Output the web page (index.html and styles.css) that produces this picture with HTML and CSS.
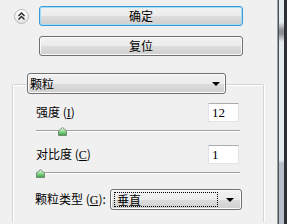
FILE: index.html
```html
<!DOCTYPE html>
<html>
<head>
<meta charset="utf-8">
<link rel="stylesheet" href="styles.css">
</head>
<body>
<div class="app">
  <div class="main">
    <div class="top-row">
      <div class="collapse">
        <svg width="15" height="15" viewBox="0 0 15 15">
          <polyline points="4.5,7 7.5,4 10.5,7" fill="none" stroke="#222" stroke-width="1.3"/>
          <polyline points="4.5,10.5 7.5,7.5 10.5,10.5" fill="none" stroke="#222" stroke-width="1.3"/>
        </svg>
      </div>
      <div class="btn btn-focus">确定</div>
    </div>
    <div class="btn-row"><div class="btn">复位</div></div>
    <div class="group">
      <div class="combo combo-head"><span class="combo-text">颗粒</span><span class="arrow"></span></div>
      <div class="field"><span class="label">强度 (<u>I</u>)</span><span class="num">12</span></div>
      <div class="slider"><span class="track"></span><span class="thumb" style="left:22px"><svg width="9" height="9" viewBox="0 0 9 9"><defs><linearGradient id="g1" x1="0" y1="0" x2="0" y2="1"><stop offset="0" stop-color="#f4fbf4"/><stop offset="0.5" stop-color="#8fd98f"/><stop offset="1" stop-color="#2f9e3a"/></linearGradient></defs><polygon points="4.5,0.5 8.5,4 8.5,8.5 0.5,8.5 0.5,4" fill="url(#g1)" stroke="#7a8a7a" stroke-width="1"/></svg></span></div>
      <div class="field field2"><span class="label">对比度 (<u>C</u>)</span><span class="num">1</span></div>
      <div class="slider"><span class="track"></span><span class="thumb" style="left:0px"><svg width="9" height="9" viewBox="0 0 9 9"><defs><linearGradient id="g2" x1="0" y1="0" x2="0" y2="1"><stop offset="0" stop-color="#f4fbf4"/><stop offset="0.5" stop-color="#8fd98f"/><stop offset="1" stop-color="#2f9e3a"/></linearGradient></defs><polygon points="4.5,0.5 8.5,4 8.5,8.5 0.5,8.5 0.5,4" fill="url(#g2)" stroke="#7a8a7a" stroke-width="1"/></svg></span></div>
      <div class="type-row">
        <span class="label">颗粒类型 (<u>G</u>):</span>
        <div class="combo combo-type"><span class="focus-rect">垂直</span><span class="arrow"></span></div>
      </div>
    </div>
  </div>
  <div class="edge">
    <div class="edge-a"></div>
    <div class="edge-b"></div>
    <div class="edge-c"></div>
    <div class="edge-d"></div>
  </div>
</div>
</body>
</html>
```

FILE: styles.css
```css
* { box-sizing: border-box; }
html, body { margin: 0; padding: 0; }
body {
  background: #f0f0f0;
  font-family: "Noto Sans CJK SC", "Noto Sans", sans-serif;
  font-size: 12px;
  color: #000;
  width: 287px;
  height: 224px;
  overflow: hidden;
}
.app { display: flex; height: 224px; }
.main { width: 277px; height: 224px; overflow: hidden; }
.top-row {
  display: flex;
  align-items: center;
  padding-top: 6px;
  padding-left: 14px;
}
.collapse {
  width: 15px;
  height: 15px;
  border-radius: 50%;
  border: 1px solid #b9b9b9;
  background: linear-gradient(#ffffff, #e4e4e4);
  margin-right: 10px;
  display: flex;
  align-items: center;
  justify-content: center;
  margin-top: 1px;
}
.collapse svg { display: block; margin: -1px; }
.btn {
  width: 204px;
  height: 20px;
  border: 1px solid #707070;
  border-radius: 3px;
  background: linear-gradient(#f2f2f2 0%, #ebebeb 50%, #dddddd 51%, #cfcfcf 100%);
  box-shadow: inset 0 0 0 1px #fbfbfb;
  display: flex;
  align-items: center;
  justify-content: center;
  line-height: 18px;
}
.btn-focus {
  border-color: #3c9ad8;
  box-shadow: inset 0 0 0 1px #9fdcf6;
}
.btn-row { margin-top: 10px; padding-left: 39px; }
.group {
  margin-top: 28px;
  margin-left: 12px;
  width: 252px;
  height: 138px;
  border: 1px solid #d5d5d5;
  border-bottom: 0;
  box-shadow: inset 1px 1px 0 #ffffff, 1px 0 0 #ffffff;
  border-radius: 2px 2px 0 0;
}
.combo {
  height: 21px;
  border: 1px solid #707070;
  border-radius: 3px;
  background: linear-gradient(#f2f2f2 0%, #ebebeb 50%, #dddddd 51%, #cfcfcf 100%);
  box-shadow: inset 0 0 0 1px #fbfbfb;
  display: flex;
  align-items: center;
  position: relative;
}
.combo-head {
  margin-top: -12px;
  margin-left: 14px;
  width: 199px;
  padding-left: 2px;
}
.combo-text { flex: 1; line-height: 19px; }
.arrow {
  width: 0;
  height: 0;
  border-left: 4px solid transparent;
  border-right: 4px solid transparent;
  border-top: 4px solid #000;
  margin-right: 5px;
  margin-top: 1px;
}
.field {
  margin-top: 9px;
  margin-left: 23px;
  width: 203px;
  height: 19px;
  display: flex;
  align-items: center;
  justify-content: space-between;
}
.field2 { margin-top: 8px; }
.label { line-height: 19px; white-space: pre; }
.label u { text-decoration: underline; text-underline-offset: 1px; font-family: "Liberation Serif", serif; }
.num {
  width: 31px;
  height: 19px;
  background: #fff;
  border: 1px solid #e2e3ea;
  border-top-color: #abadb3;
  font-family: "Liberation Serif", serif;
  font-size: 13px;
  line-height: 17px;
  padding-left: 3px;
}
.slider {
  position: relative;
  margin-top: 3px;
  margin-left: 23px;
  width: 204px;
  height: 12px;
}
.track {
  position: absolute;
  left: 0;
  right: 0;
  top: 5px;
  height: 2px;
  border-top: 1px solid #a0a0a0;
  border-bottom: 1px solid #ffffff;
}
.thumb {
  position: absolute;
  top: 2px;
  width: 9px;
  height: 9px;
}
.thumb svg { display: block; }
.type-row {
  margin-top: 10px;
  margin-left: 22px;
  display: flex;
  align-items: center;
}
.type-row .label { width: 75px; }
.combo-type {
  width: 132px;
  padding: 2px;
}
.focus-rect {
  flex: 1;
  height: 15px;
  border: 1px dotted #000;
  line-height: 13px;
  padding-left: 2px;
  margin-right: 8px;
  margin-left: 1px;
}
.edge { width: 10px; display: flex; height: 224px; }
.edge-a { width: 1px; background: #9aa0a6; }
.edge-b { width: 1px; background: #4c5157; }
.edge-c {
  width: 5px;
  background: linear-gradient(#e6ebef 0px, #e6ebef 22px, #8d9196 30px, #8d9196 34px, #e6ebef 42px, #e6ebef 160px, #b7bfcb 163px, #b7bfcb 224px);
}
.edge-d { width: 3px; background: #2d3034; }
```
